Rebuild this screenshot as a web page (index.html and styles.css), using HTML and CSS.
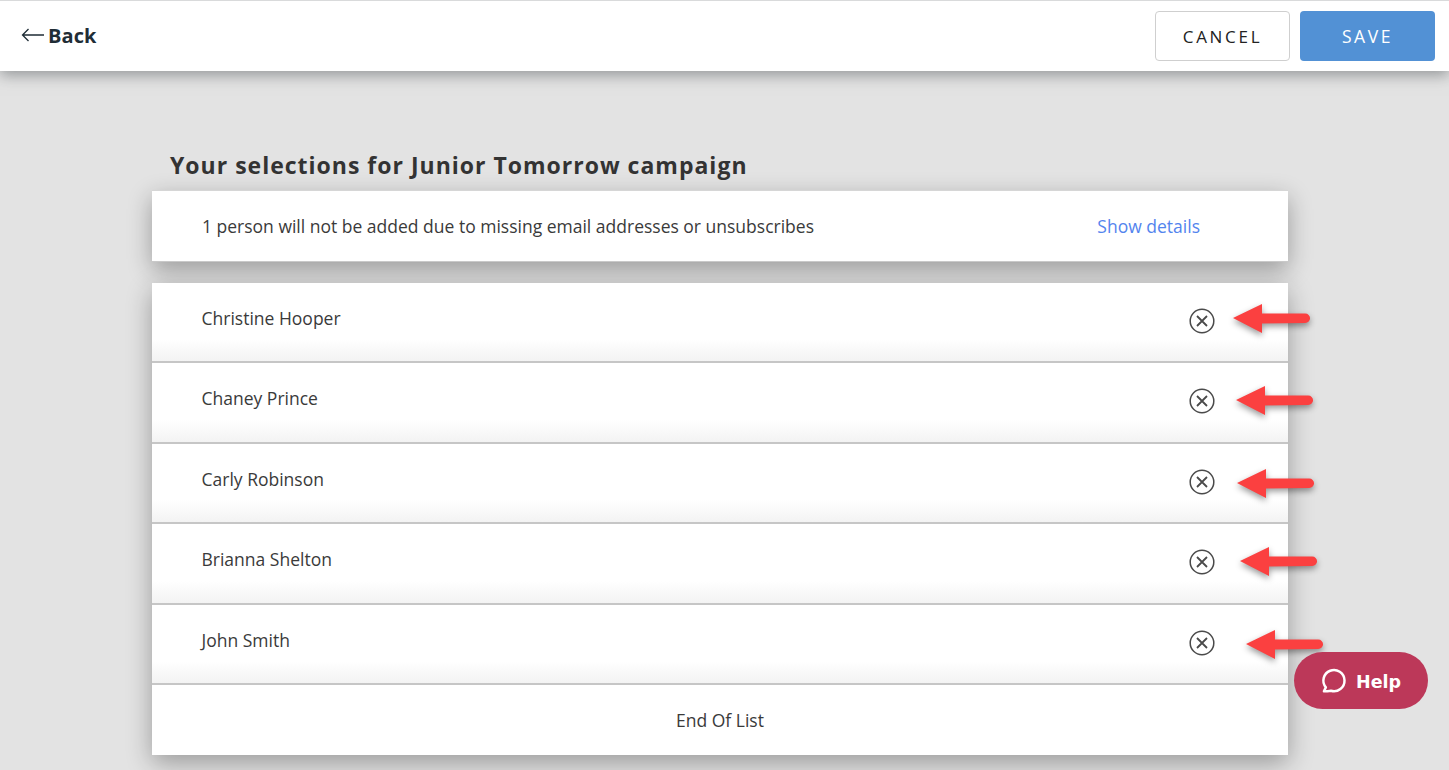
FILE: index.html
```html
<!DOCTYPE html>
<html>
<head>
	<meta charset="utf-8">
	<title>Your selections</title>
	<link rel="stylesheet" href="styles.css">
</head>
<body>
	<div class="topbar">
		<a class="back" href="#">
			<svg class="back-arrow" width="24" height="14" viewBox="0 0 24 14"><path d="M23 7H1.5M7.5 1L1.5 7l6 6" fill="none" stroke="#1f2d36" stroke-width="1.3"/></svg>
			<span>Back</span>
		</a>
		<div class="actions">
			<button class="btn btn-cancel">CANCEL</button>
			<button class="btn btn-save">SAVE</button>
		</div>
	</div>

	<div class="content">
		<h1 class="title">Your selections for Junior Tomorrow campaign</h1>

		<div class="card notice">
			<span>1 person will not be added due to missing email addresses or unsubscribes</span>
			<a class="details" href="#">Show details</a>
		</div>

		<div class="card list">
			<div class="row">
				<span class="name">Christine Hooper</span>
				<svg class="remove" width="26" height="26" viewBox="0 0 26 26"><circle cx="13" cy="13" r="11.8"/><path class="cross" d="M8 8l10 10M18 8L8 18"/></svg>
				<svg class="arrow arrow-1" width="84" height="40" viewBox="0 0 84 40"><path d="M3 18L32 4v9.500h43.300a4.750 4.750 0 0 1 0 9.500L32 23.500V33z"/></svg>
			</div>
			<div class="row">
				<span class="name">Chaney Prince</span>
				<svg class="remove" width="26" height="26" viewBox="0 0 26 26"><circle cx="13" cy="13" r="11.8"/><path class="cross" d="M8 8l10 10M18 8L8 18"/></svg>
				<svg class="arrow arrow-2" width="84" height="40" viewBox="0 0 84 40"><path d="M3 18L32 4v9.500h43.300a4.750 4.750 0 0 1 0 9.500L32 23.500V33z"/></svg>
			</div>
			<div class="row">
				<span class="name">Carly Robinson</span>
				<svg class="remove" width="26" height="26" viewBox="0 0 26 26"><circle cx="13" cy="13" r="11.8"/><path class="cross" d="M8 8l10 10M18 8L8 18"/></svg>
				<svg class="arrow arrow-3" width="84" height="40" viewBox="0 0 84 40"><path d="M3 18L32 4v9.500h43.300a4.750 4.750 0 0 1 0 9.500L32 23.500V33z"/></svg>
			</div>
			<div class="row">
				<span class="name">Brianna Shelton</span>
				<svg class="remove" width="26" height="26" viewBox="0 0 26 26"><circle cx="13" cy="13" r="11.8"/><path class="cross" d="M8 8l10 10M18 8L8 18"/></svg>
				<svg class="arrow arrow-4" width="84" height="40" viewBox="0 0 84 40"><path d="M3 18L32 4v9.500h43.300a4.750 4.750 0 0 1 0 9.500L32 23.500V33z"/></svg>
			</div>
			<div class="row">
				<span class="name">John Smith</span>
				<svg class="remove" width="26" height="26" viewBox="0 0 26 26"><circle cx="13" cy="13" r="11.8"/><path class="cross" d="M8 8l10 10M18 8L8 18"/></svg>
				<svg class="arrow arrow-5" width="84" height="40" viewBox="0 0 84 40"><path d="M3 18L32 4v9.500h43.300a4.750 4.750 0 0 1 0 9.500L32 23.500V33z"/></svg>
			</div>
			<div class="list-end">End Of List</div>
		</div>
	</div>

	<a class="help" href="#">
		<svg width="28" height="28" viewBox="0 0 26 26"><path d="M5.500 22.500l1.800-3.600a9.800 9.800 0 1 1 4.700 3.100c-2 .3-4.400.6-6.500.5z" fill="none" stroke="#fff" stroke-width="2.300" stroke-linejoin="round"/></svg>
		<span>Help</span>
	</a>
</body>
</html>
```

FILE: styles.css
```css
html, body { margin: 0; height: 770px; overflow: hidden; }
body { background: #e3e3e3; font-family: "Open Sans", "Noto Sans", sans-serif; color: #3a3a3a; position: relative; }
a { text-decoration: none; }

.topbar { height: 70px; background: #fff; border-top: 1px solid #d9dadb; display: flex; justify-content: space-between; align-items: center; padding: 0 14px 0 21px; box-shadow: 0 4px 14px rgba(80,85,90,.55); position: relative; }
.back { display: flex; align-items: center; gap: 3px; color: #1f2d36; font-size: 20px; font-weight: 700; letter-spacing: .1px; margin-top: -2px; }
.actions { display: flex; gap: 10px; }
.btn { height: 50px; border-radius: 4px; font-family: inherit; font-size: 17px; letter-spacing: 2.7px; padding: 0; }
.btn-cancel { width: 135px; background: #fff; border: 1px solid #cfcfcf; color: #222; }
.btn-save { width: 135px; background: #5291d5; border: 0; color: #fff; font-size: 17.5px; letter-spacing: 2.6px; }

.content { width: 1136px; margin: 0 0 0 152px; padding-top: 79px; }
.title { margin: 0 0 10px 18px; font-size: 23px; line-height: 30px; font-weight: 700; letter-spacing: 1px; color: #333; }

.card { background: #fff; box-shadow: 0 8px 24px rgba(0,0,0,.32); }
.notice { height: 72px; box-sizing: border-box; border-top: 1px solid #d6d6d6; border-bottom: 1px solid #c9c9c9; display: flex; justify-content: space-between; align-items: center; padding: 0 88px 0 50px; font-size: 17.5px; margin-bottom: 21px; }
.details { color: #5384ee; }

.list { height: 472px; }
.row { height: 80.5px; box-sizing: border-box; border-bottom: 2px solid #c6c6c6; padding: 0 73px 8px 49.5px; display: flex; justify-content: space-between; align-items: center; font-size: 17.5px; position: relative; background: linear-gradient(to bottom, #fff 72%, #f3f3f3 100%); }
.row:first-child { height: 80px; }
.remove { fill: none; stroke: #4a4a4a; stroke-width: 1.5; margin-top: 6px; }
.cross { stroke-width: 1.8; }
.list-end { height: 70px; display: flex; justify-content: center; align-items: center; font-size: 17.5px; }

/* annotation arrows drawn over the row, hand placed so none of them line up */
.arrow { position: absolute; fill: #fb4040; filter: drop-shadow(0 3px 3px rgba(0,0,0,.4)); }
.arrow-1 { left: 1078px; top: 17px; }
.arrow-2 { left: 1081px; top: 19px; }
.arrow-3 { left: 1082px; top: 21px; }
.arrow-4 { left: 1085px; top: 19px; }
.arrow-5 { left: 1091px; top: 21.5px; }

.help { position: absolute; left: 1294px; top: 652px; width: 134px; height: 57px; box-sizing: border-box; padding: 3px 0 0 25px; border-radius: 29px; background: #bc3859; color: #fff; display: flex; align-items: center; gap: 10px; font-family: "DejaVu Sans", sans-serif; font-size: 17.5px; font-weight: 700; }
.help svg { margin-top: -3px; margin-left: -1px; }
```
